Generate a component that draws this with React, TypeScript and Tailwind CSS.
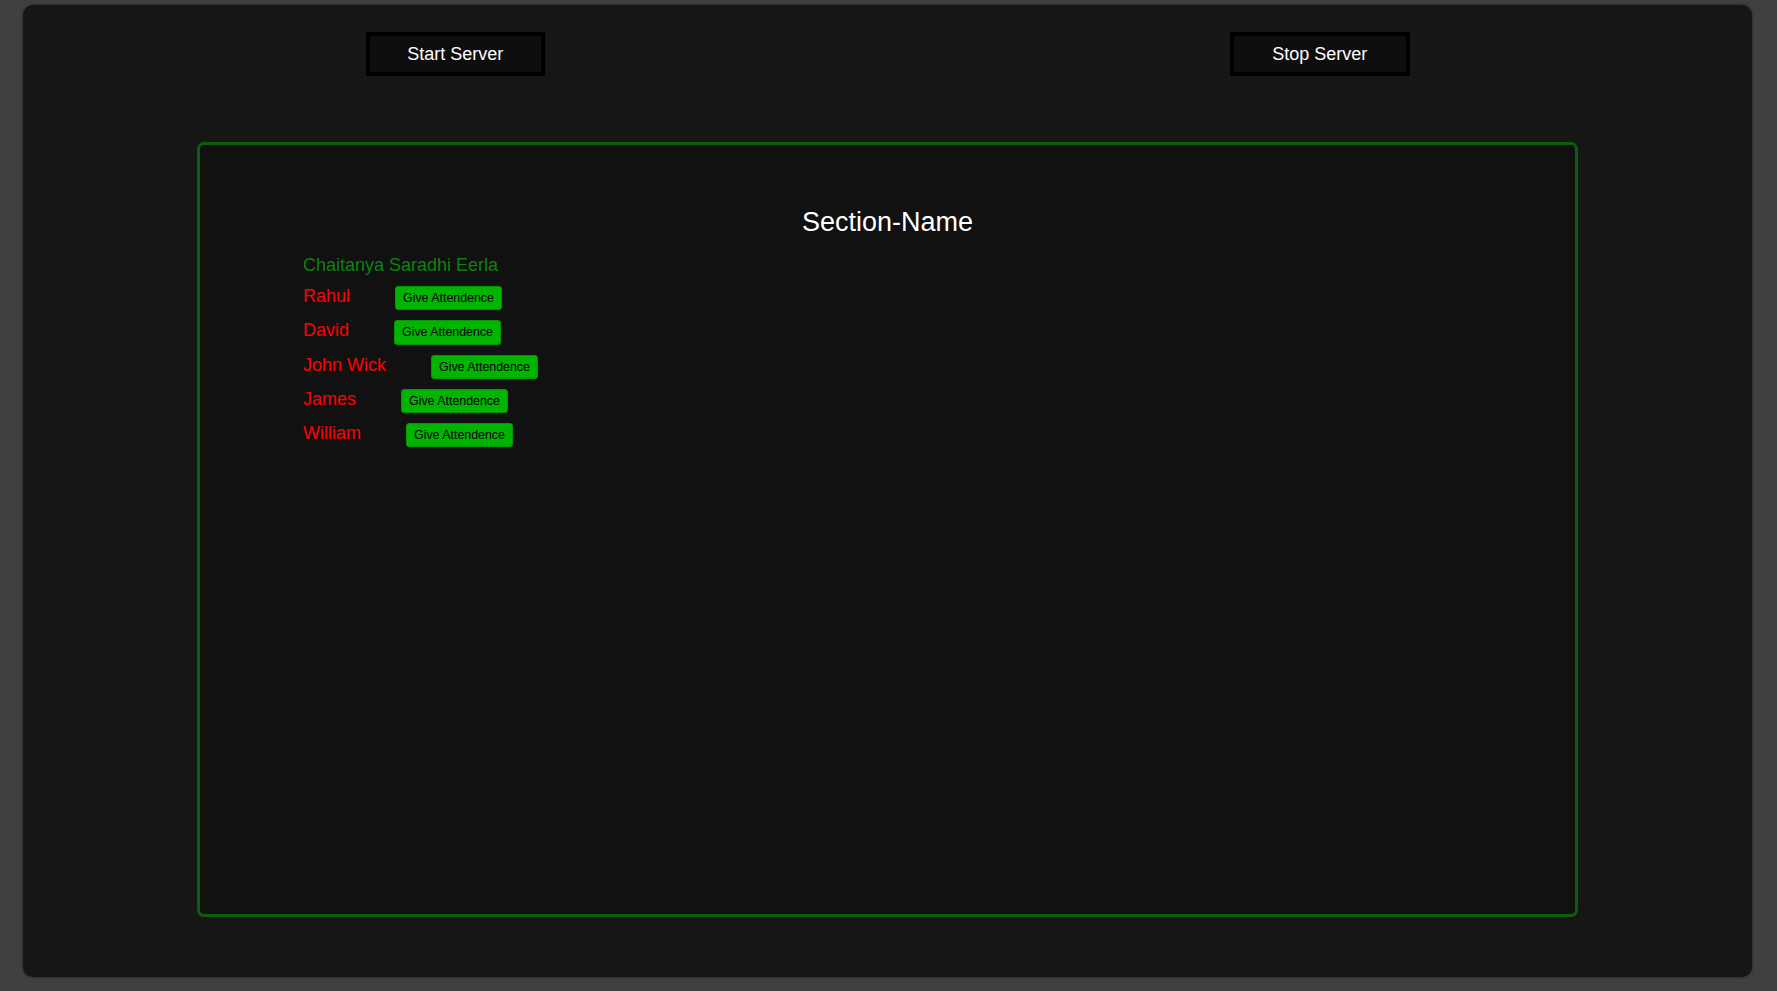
const students = ['Rahul', 'David', 'John Wick', 'James', 'William'];

export default function App() {
  return (
    <div className="min-h-screen w-full bg-[#404040] pl-[23px] pr-[25px] pt-[5px] pb-[14px] font-['Liberation_Sans',Arial,sans-serif]">
      <div className="flex h-[972px] flex-col rounded-[10px] bg-[#161616] pt-[27px] shadow-[0_0_3px_rgba(0,0,0,0.5)]">
        {/* server controls */}
        <div className="flex">
          <div className="flex flex-1 justify-center">
            <button className="h-[44px] w-[179px] border-4 border-black bg-[#0e0e0e] text-[18px] text-white">
              Start Server
            </button>
          </div>
          <div className="flex flex-1 justify-center">
            <button className="h-[44px] w-[180px] border-4 border-black bg-[#0e0e0e] text-[18px] text-white">
              Stop Server
            </button>
          </div>
        </div>

        <div className="mx-auto mt-[66px] h-[775px] w-[1381px] rounded-[7px] border-[3px] border-[#0c5e0c] bg-[#111111] pt-[62px]">
          <h1 className="text-center text-[27px] leading-[31px] text-white">Section-Name</h1>

          <div className="mt-[17px] flex flex-col gap-[10px] pl-[103px]">
            <div className="text-[18px] leading-[21px] text-[#0f800f]">Chaitanya Saradhi Eerla</div>
            {students.map((name) => (
              <div key={name} className="flex items-baseline">
                <span className="text-[18px] leading-[21px] text-[#ff0000]">{name}</span>
                <button className="ml-[45px] h-[24.3px] rounded-[3px] border border-[#009a00] bg-[#00b400] px-[7px] text-[12.4px] leading-[14px] text-black">
                  Give Attendence
                </button>
              </div>
            ))}
          </div>
        </div>
      </div>
    </div>
  );
}
